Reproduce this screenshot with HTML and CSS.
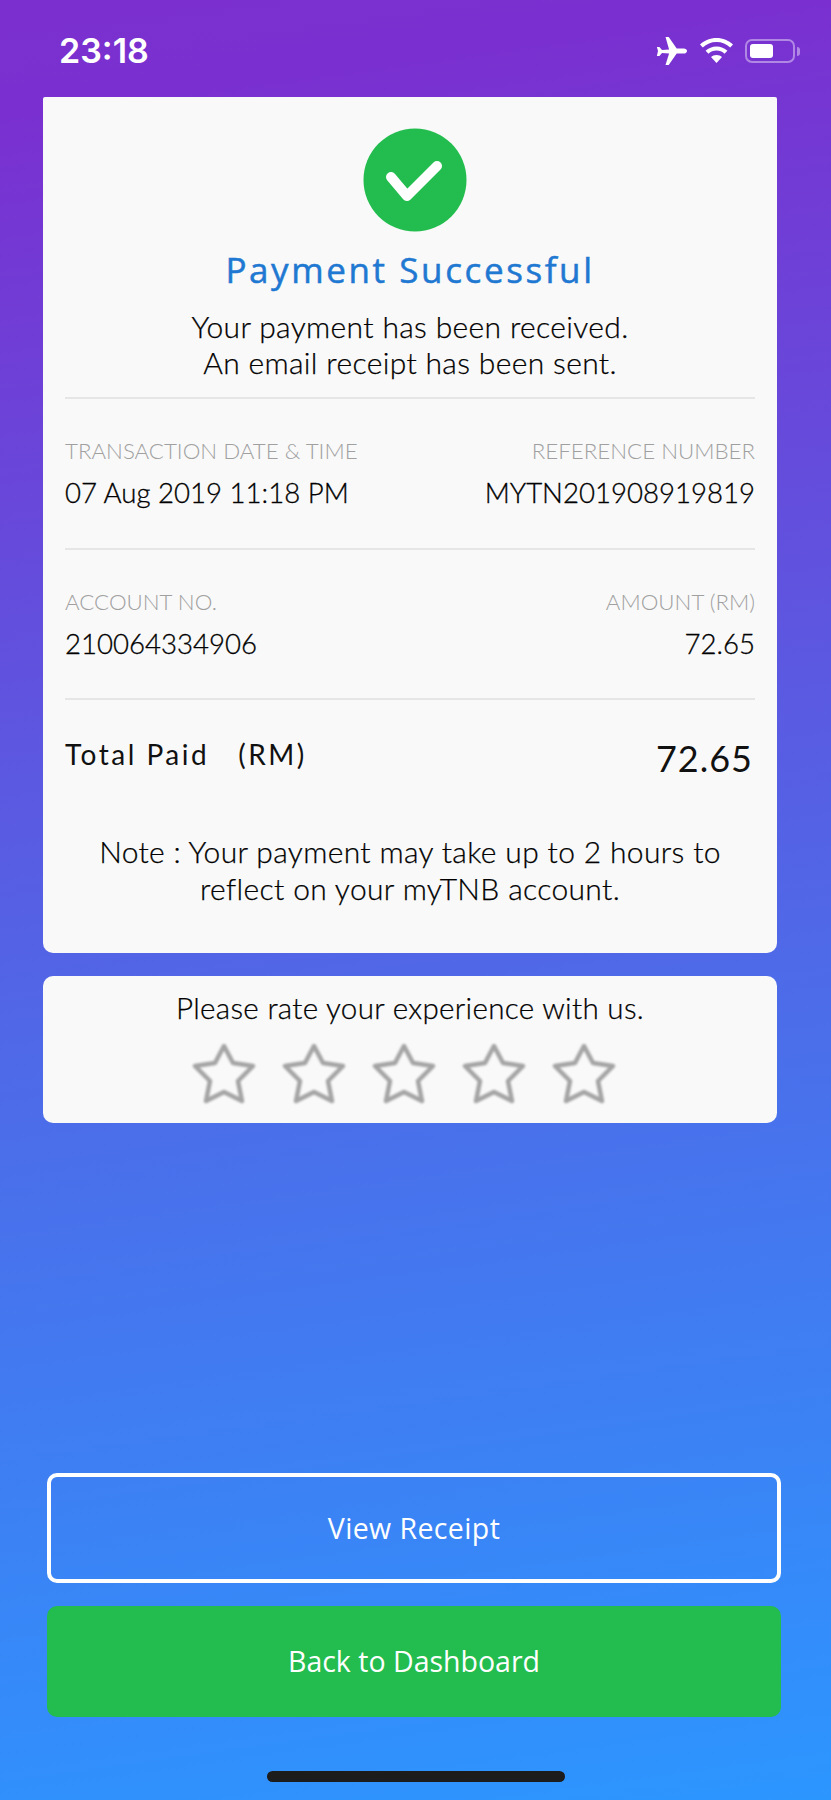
FILE: index.html
```html
<!DOCTYPE html>
<html lang="en">
<head>
<meta charset="utf-8">
<title>Payment Successful</title>
<link rel="stylesheet" href="styles.css">
</head>
<body>
<div class="screen">
  <header class="status">
    <span class="time">23:18</span>
    <div class="status-icons">
      <svg class="plane" viewBox="0 0 31 28"><path d="M9.500 0h3.200l8 11.400h7.100c1.700 0 3.200 1.200 3.200 2.600s-1.500 2.600-3.200 2.600h-7.100l-8 11.400H9.500l3.600-11.400-7.100-.6-2.600 3H.9L2 14 .9 10h2.500l2.600 3 7.100-.6z" fill="#fff"/></svg>
      <svg class="wifi" viewBox="0 0 33 25"><path d="M16.500 0C23 0 28.600 2.400 33 6.500l-2.800 3C26.600 6 21.900 4 16.500 4S6.400 6 2.800 9.500L0 6.500C4.400 2.400 10 0 16.500 0z" fill="#fff"/><path d="M16.500 8.500c4.300 0 8 1.600 10.900 4.300l-2.900 3c-2.100-2-4.900-3.200-8-3.200s-5.900 1.200-8 3.200l-2.900-3c2.900-2.700 6.600-4.300 10.900-4.300z" fill="#fff"/><path d="M16.500 17c2.200 0 4.100.8 5.500 2.100L16.500 25 11 19.100c1.400-1.300 3.300-2.100 5.500-2.100z" fill="#fff"/></svg>
      <div class="battery"><div class="battery-body"><div class="battery-level"></div></div><div class="battery-cap"></div></div>
    </div>
  </header>

  <main class="content">
    <section class="card receipt">
      <svg class="check" viewBox="0 0 104 104"><circle cx="52" cy="52" r="51.500" fill="#22bd4e"/><path d="M28 49l16 19 30-30" fill="none" stroke="#fff" stroke-width="10" stroke-linecap="round" stroke-linejoin="round"/></svg>
      <h1 class="title">Payment Successful</h1>
      <p class="lead">Your payment has been received.<br>An email receipt has been sent.</p>

      <div class="row">
        <div class="cell">
          <div class="label">TRANSACTION DATE &amp; TIME</div>
          <div class="value">07 Aug 2019 11:18 PM</div>
        </div>
        <div class="cell cell-right">
          <div class="label">REFERENCE NUMBER</div>
          <div class="value">MYTN201908919819</div>
        </div>
      </div>

      <div class="row">
        <div class="cell">
          <div class="label">ACCOUNT NO.</div>
          <div class="value">210064334906</div>
        </div>
        <div class="cell cell-right">
          <div class="label">AMOUNT (RM)</div>
          <div class="value">72.65</div>
        </div>
      </div>

      <div class="total">
        <span class="total-label">Total Paid&nbsp;&nbsp;&nbsp;(RM)</span>
        <span class="total-value">72.65</span>
      </div>

      <p class="note">Note : Your payment may take up to 2 hours to<br>reflect on your myTNB account.</p>
    </section>

    <section class="card rating">
      <p class="rating-text">Please rate your experience with us.</p>
      <div class="stars">
        <svg class="star" viewBox="0 0 64 60"><path d="M32 2l9 17 20 3-15 15 4 20-18-9-18 9 4-20L3 22l20-3z"/></svg>
        <svg class="star" viewBox="0 0 64 60"><path d="M32 2l9 17 20 3-15 15 4 20-18-9-18 9 4-20L3 22l20-3z"/></svg>
        <svg class="star" viewBox="0 0 64 60"><path d="M32 2l9 17 20 3-15 15 4 20-18-9-18 9 4-20L3 22l20-3z"/></svg>
        <svg class="star" viewBox="0 0 64 60"><path d="M32 2l9 17 20 3-15 15 4 20-18-9-18 9 4-20L3 22l20-3z"/></svg>
        <svg class="star" viewBox="0 0 64 60"><path d="M32 2l9 17 20 3-15 15 4 20-18-9-18 9 4-20L3 22l20-3z"/></svg>
      </div>
    </section>
  </main>

  <div class="actions">
    <div class="btn btn-outline">View Receipt</div>
    <div class="btn btn-green">Back to Dashboard</div>
  </div>
  <div class="home-bar"></div>
</div>
</body>
</html>
```
FILE: styles.css
```css
* { box-sizing: border-box; }
html, body { margin: 0; padding: 0; }
body { font-family: "Lato", "Liberation Sans", sans-serif; }
.screen {
  width: 831px;
  height: 1800px;
  display: flex;
  flex-direction: column;
  background: linear-gradient(172deg, #7b2fcf 0%, #7a30d0 6%, #4f69e8 55%, #2c96ff 100%);
  overflow: hidden;
}
.status {
  height: 97px;
  flex: none;
  padding: 0 31px 0 59px;
  display: flex;
  justify-content: space-between;
  color: #fff;
}
.time {
  font-family: "Inter", "Liberation Sans", sans-serif;
  font-size: 34px;
  font-weight: 600;
  line-height: 39px;
  margin-top: 31px;
}
.status-icons { display: flex; align-items: flex-start; padding-top: 37px; }
.plane { width: 31px; height: 28px; display: block; }
.wifi { width: 33px; height: 25px; display: block; margin: 1px 0 0 13px; }
.battery { display: flex; align-items: center; margin: 2px 0 0 12px; height: 24px; }
.battery-body {
  width: 50px;
  height: 24px;
  border: 2px solid rgba(255, 255, 255, 0.42);
  border-radius: 7px;
  padding: 3px;
}
.battery-level { width: 23px; height: 14px; background: #fff; border-radius: 3px; }
.battery-cap {
  width: 3px;
  height: 9px;
  margin-left: 2px;
  background: rgba(255, 255, 255, 0.42);
  border-radius: 0 3px 3px 0;
}
.content { padding: 0 54px 0 43px; flex: none; }
.card { background: #f9f9f9; width: 734px; }
.receipt {
  height: 856px;
  padding: 31px 22px 0;
  border-radius: 2px 2px 10px 10px;
  display: flex;
  flex-direction: column;
}
.check { width: 104px; height: 104px; display: block; margin: 0 0 0 298px; flex: none; filter: blur(0.5px); }
.title {
  margin: 19px 0 0;
  text-align: center;
  font-family: "Open Sans", "Liberation Sans", sans-serif;
  font-size: 35px;
  line-height: 38px;
  font-weight: 400;
  letter-spacing: 2.600px;
  color: #1f78d1;
  -webkit-text-stroke: 0.5px #1f78d1;
}
.lead {
  margin: 19px 0 0;
  padding-bottom: 17px;
  text-align: center;
  font-size: 30px;
  line-height: 36px;
  font-weight: 300;
  letter-spacing: 0.35px;
  color: #000;
  -webkit-text-stroke: 0.25px #000;
  border-bottom: 2px solid #e6e6e6;
}
.row {
  display: flex;
  justify-content: space-between;
  height: 150.5px;
  padding-top: 39px;
  border-bottom: 2px solid #e6e6e6;
}
.cell-right { text-align: right; }
.label { font-size: 22.300px; line-height: 26px; font-weight: 300; color: #a0a0a0; }
.value {
  font-size: 27.600px;
  line-height: 34px;
  font-weight: 300;
  color: #000;
  -webkit-text-stroke: 0.3px #000;
  margin-top: 12px;
}
.total {
  display: flex;
  justify-content: space-between;
  align-items: flex-start;
  padding-top: 34px;
  padding-right: 2px;
  color: #111;
}
.total-label { font-size: 28px; line-height: 40px; font-weight: 400; letter-spacing: 2.500px; }
.total-value { font-size: 36px; line-height: 46px; font-weight: 400; letter-spacing: 1px; margin-top: 1px; }
.note {
  margin: 52px 0 0;
  text-align: center;
  font-size: 30px;
  line-height: 36.500px;
  font-weight: 300;
  letter-spacing: 0.35px;
  color: #000;
  -webkit-text-stroke: 0.25px #000;
}
.rating { height: 147px; margin-top: 23px; border-radius: 10px; padding-top: 14px; }
.rating-text {
  margin: 0;
  text-align: center;
  font-size: 29.600px;
  line-height: 36px;
  font-weight: 300;
  letter-spacing: 0.3px;
  color: #000;
  -webkit-text-stroke: 0.25px #000;
}
.stars { display: flex; justify-content: center; gap: 26px; margin-top: 18px; padding-right: 12px; }
.star { width: 64px; height: 60px; display: block; filter: blur(0.8px); }
.star path { fill: none; stroke: #a4a4a4; stroke-width: 4.500; stroke-linejoin: round; }
.actions { margin-top: auto; padding: 0 50px 0 47px; display: flex; flex-direction: column; gap: 23px; }
.btn {
  height: 111px;
  border-radius: 10px;
  display: flex;
  align-items: center;
  justify-content: center;
  color: #fff;
  font-family: "Open Sans", "Liberation Sans", sans-serif;
  font-size: 28.500px;
}
.btn-outline { height: 110px; border: 4px solid #fff; letter-spacing: 0.4px; }
.btn-green { background: #22bd4e; padding-bottom: 2px; }
.home-bar {
  flex: none;
  width: 298px;
  height: 11px;
  margin: 54px auto 18px;
  border-radius: 6px;
  background: #1c1c1c;
}
```
